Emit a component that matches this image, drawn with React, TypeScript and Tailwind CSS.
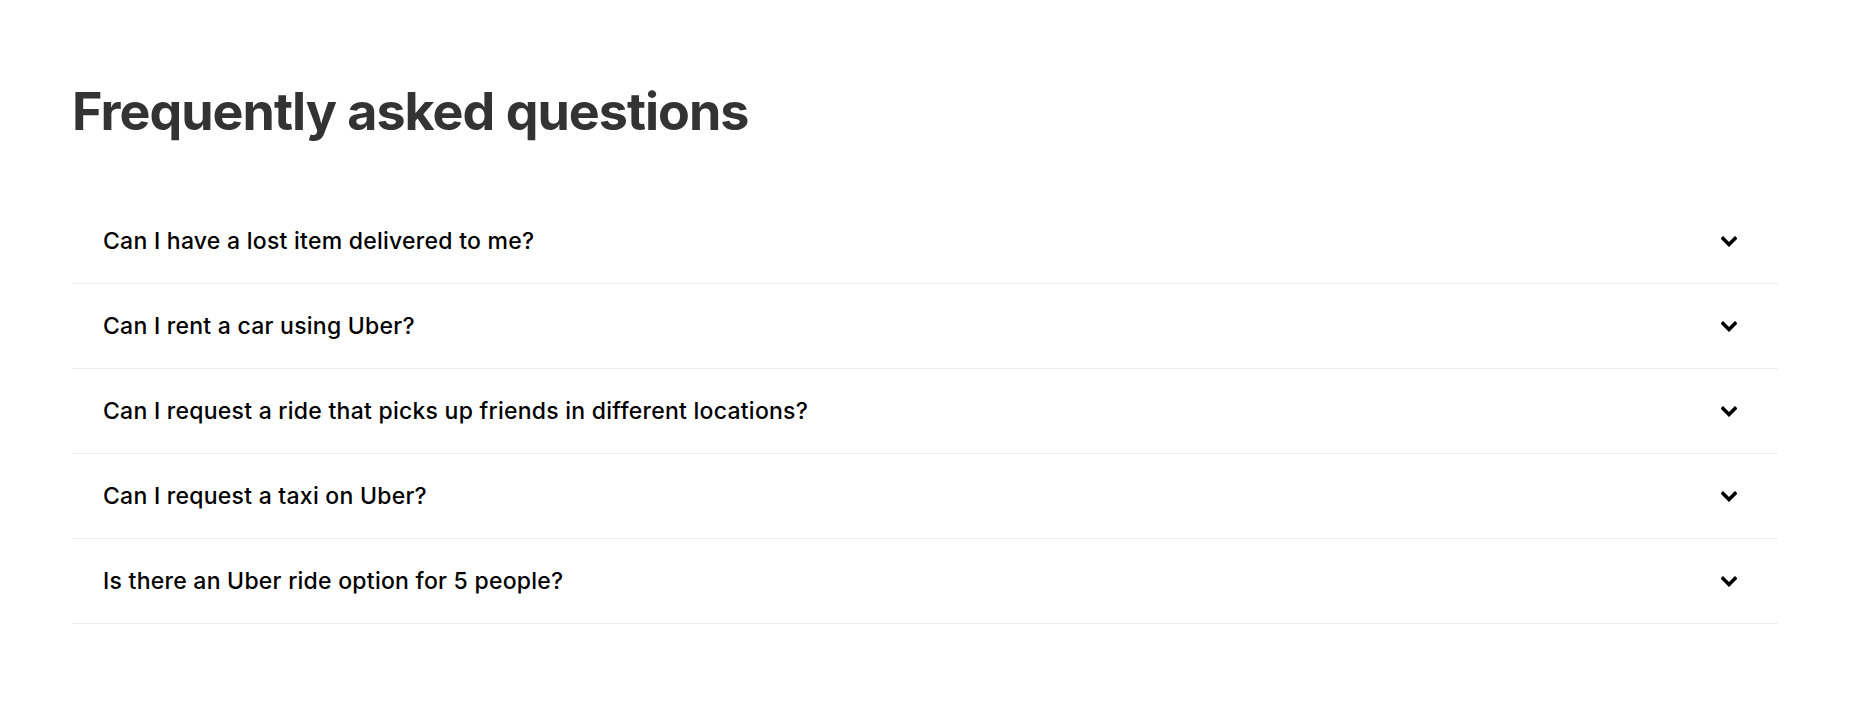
const questions = [
  "Can I have a lost item delivered to me?",
  "Can I rent a car using Uber?",
  "Can I request a ride that picks up friends in different locations?",
  "Can I request a taxi on Uber?",
  "Is there an Uber ride option for 5 people?",
];

function Chevron() {
  return (
    <svg width="16" height="11" viewBox="0 0 16 11" fill="none" aria-hidden="true">
      <path d="M2 2.5l6 6 6-6" stroke="#000" strokeWidth="3.6" strokeLinecap="square" />
    </svg>
  );
}

export default function App() {
  return (
    <div className="min-h-[720px] w-full bg-white font-['Inter',sans-serif]">
      <section className="pl-[72px] pr-[91px] pt-[80px]">
        <h1 className="text-[52px] font-bold leading-[64px] tracking-[-1px] text-[#333333]">
          Frequently asked questions
        </h1>

        <div className="mt-[55px] flex flex-col">
          {questions.map((q) => (
            <button
              key={q}
              className="flex h-[85px] items-center justify-between border-b border-[#eeeeee] pl-[31px] pr-[41px] text-left"
            >
              <span className="text-[23px] font-medium tracking-[0.25px] text-black">{q}</span>
              <Chevron />
            </button>
          ))}
        </div>
      </section>
    </div>
  );
}
